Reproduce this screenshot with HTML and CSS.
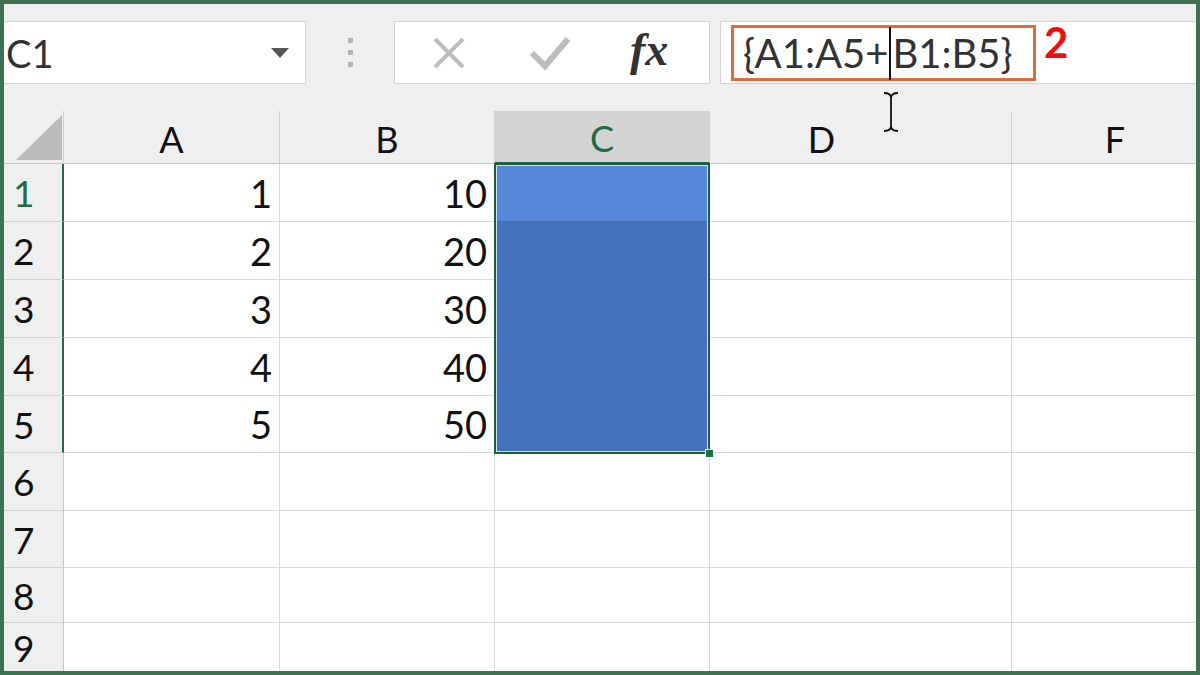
FILE: index.html
```html
<!DOCTYPE html>
<html>
<head>
    <title>Fórmula de matriz</title>
    <link rel="stylesheet" href="styles.css">
</head>
<body>
    <div class="frame">
        <div class="toolbar">
            <div class="namebox">
                <span class="ref">C1</span>
                <span class="drop"></span>
            </div>
            <div class="grip"><i></i><i></i><i></i></div>
            <div class="actions">
                <svg class="ico" width="40" height="40" viewBox="0 0 40 40">
                    <path d="M6 6 L34 34 M34 6 L6 34" stroke="#bdbdbd" stroke-width="4" fill="none"/>
                </svg>
                <svg class="ico" width="44" height="40" viewBox="0 0 44 40">
                    <path d="M4 20 L17 33 L40 6" stroke="#bdbdbd" stroke-width="6" fill="none"/>
                </svg>
                <span class="fx">fx</span>
            </div>
            <div class="formula">
                <div class="formula-hl">{A1:A5+<span class="text-caret"></span>B1:B5}</div>
                <span class="step">2</span>
            </div>
            <!-- cursor del ratón sobre la barra -->
            <svg class="ibeam" width="18" height="42" viewBox="0 0 18 42">
                <path d="M2 2 Q9 2 9 7 Q9 2 16 2 M9 7 L9 35 M2 40 Q9 40 9 35 Q9 40 16 40" stroke="#111" stroke-width="1.8" fill="none"/>
            </svg>
        </div>

        <div class="sheet">
            <div class="corner">
                <svg width="60" height="53" viewBox="0 0 60 53"><polygon points="12,49 58,4 58,49" fill="#bcbcbc"/></svg>
            </div>
            <div class="col-head">A</div>
            <div class="col-head">B</div>
            <div class="col-head active">C</div>
            <div class="col-head col-d">D</div>
            <div class="col-head last">F</div>

            <div class="selection"><span class="handle"></span></div>

            <div class="row-head sel green">1</div>
            <div class="cell num">1</div>
            <div class="cell num">10</div>
            <div class="cell"></div>
            <div class="cell last"></div>

            <div class="row-head sel">2</div>
            <div class="cell num">2</div>
            <div class="cell num">20</div>
            <div class="cell"></div>
            <div class="cell last"></div>

            <div class="row-head sel">3</div>
            <div class="cell num">3</div>
            <div class="cell num">30</div>
            <div class="cell"></div>
            <div class="cell last"></div>

            <div class="row-head sel">4</div>
            <div class="cell num">4</div>
            <div class="cell num">40</div>
            <div class="cell"></div>
            <div class="cell last"></div>

            <div class="row-head sel">5</div>
            <div class="cell num">5</div>
            <div class="cell num">50</div>
            <div class="cell"></div>
            <div class="cell last"></div>

            <div class="row-head">6</div>
            <div class="cell"></div><div class="cell"></div><div class="cell"></div><div class="cell"></div><div class="cell last"></div>
            <div class="row-head">7</div>
            <div class="cell"></div><div class="cell"></div><div class="cell"></div><div class="cell"></div><div class="cell last"></div>
            <div class="row-head">8</div>
            <div class="cell"></div><div class="cell"></div><div class="cell"></div><div class="cell"></div><div class="cell last"></div>
            <div class="row-head bottom">9</div>
            <div class="cell bottom"></div><div class="cell bottom"></div><div class="cell bottom"></div><div class="cell bottom"></div><div class="cell bottom last"></div>
        </div>
    </div>
</body>
</html>
```

FILE: styles.css
```css
/* hoja de cálculo estilo Excel */
* {
    box-sizing: border-box;
}
body {
    margin: 0;
    font-family: Lato, 'Open Sans', sans-serif;
    color: #111;
}
.frame {
    width: 1200px;
    height: 675px;
    border: 4px solid #3e7152;
    background-color: #efefef;
    overflow: hidden;
    display: flex;
    flex-direction: column;
}
.toolbar {
    position: relative;
    height: 107px;
    flex: none;
    display: flex;
    align-items: flex-start;
    padding-top: 17px;
}
.namebox {
    width: 302px;
    height: 63px;
    background-color: #fff;
    border: 1px solid #d4d4d4;
    border-left: none;
    display: flex;
    align-items: center;
    justify-content: space-between;
    padding: 0 16px 0 2px;
}
.ref {
    font-size: 38px;
    color: #333;
}
.drop {
    width: 0;
    height: 0;
    border-left: 9px solid transparent;
    border-right: 9px solid transparent;
    border-top: 10px solid #555;
}
.grip {
    width: 88px;
    height: 63px;
    display: flex;
    flex-direction: column;
    align-items: center;
    justify-content: center;
    gap: 7px;
}
.grip i {
    width: 5px;
    height: 5px;
    background-color: #b3b3b3;
}
.actions {
    width: 316px;
    height: 63px;
    background-color: #fff;
    border: 1px solid #d4d4d4;
    display: flex;
    align-items: center;
    padding-left: 34px;
}
.actions .ico:first-child {
    margin-right: 59px;
}
.actions .ico:nth-child(2) {
    margin-right: 58px;
}
.fx {
    font-family: 'Liberation Serif', serif;
    font-style: italic;
    font-weight: bold;
    font-size: 46px;
    color: #333;
    margin-top: -6px;
}
.formula {
    flex: 1;
    height: 63px;
    margin-left: 10px;
    background-color: #fff;
    border: 1px solid #d4d4d4;
    border-right: none;
    display: flex;
    align-items: flex-start;
    padding: 3px 0 0 10px;
}
.formula-hl {
    width: 305px;
    height: 56px;
    border: 3px solid #e06a3c;
    font-size: 40px;
    color: #333;
    display: flex;
    align-items: center;
    padding-left: 9px;
    white-space: nowrap;
}
.text-caret {
    display: inline-block;
    width: 2px;
    height: 53px;
    background-color: #111;
    margin: 0 1px;
}
.step {
    color: #f20d0d;
    font-weight: bold;
    font-size: 42px;
    line-height: 1;
    margin: -4px 0 0 8px;
}
.ibeam {
    position: absolute;
    left: 878px;
    top: 87px;
    z-index: 3;
}

.sheet {
    flex: 1;
    display: grid;
    grid-template-columns: 60px 216px 215px 215px 302px 184px;
    grid-template-rows: 53px 58px 58px 58px 58px 57px 58px 57px 55px 1fr;
    background-color: #fff;
}
.corner {
    background-color: #efefef;
    border-right: 1px solid #d0d0d0;
    border-bottom: 1px solid #c6c6c6;
}
.corner svg {
    display: block;
}
.col-head {
    background-color: #efefef;
    border-right: 1px solid #d0d0d0;
    border-bottom: 1px solid #c6c6c6;
    display: flex;
    align-items: center;
    justify-content: center;
    font-size: 36px;
    padding-top: 3px;
}
.col-head.active {
    background-color: #d3d3d3;
    color: #1f6b43;
    border-bottom: 2px solid #1f6b43;
}
.col-head.col-d {
    padding-right: 78px;
}
.col-head.last {
    padding-left: 22px;
}
.col-head.last,
.cell.last {
    border-right: none;
}
.row-head {
    background-color: #efefef;
    border-right: 1px solid #c8c8c8;
    border-bottom: 1px solid #d2d2d2;
    display: flex;
    align-items: center;
    padding-left: 9px;
    font-size: 37px;
}
.row-head.sel {
    border-right: 2px solid #1f6b43;
}
.row-head.green {
    color: #1f6b43;
}
.row-head.bottom,
.cell.bottom {
    border-bottom: none;
}
.cell {
    border-right: 1px solid #dadada;
    border-bottom: 1px solid #dadada;
    font-size: 38px;
    display: flex;
    align-items: center;
}
.cell.num {
    justify-content: flex-end;
    padding-right: 7px;
}
.selection {
    grid-column: 4;
    grid-row: 2 / 7;
    position: relative;
    margin: -1px 0 -1px -1px;
    border: 2px solid #1d5c39;
    box-shadow: inset 0 0 0 1px #c4e4ee;
    background: linear-gradient(#5687d8 0, #5687d8 56px, #4570bc 56px);
}
.handle {
    position: absolute;
    right: -6px;
    bottom: -6px;
    width: 9px;
    height: 9px;
    background-color: #1f6b43;
    border: 1px solid #fff;
}
```
